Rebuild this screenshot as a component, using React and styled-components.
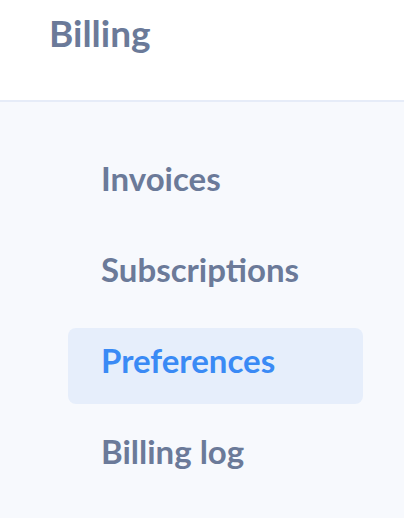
import React from "react";
import styled, { createGlobalStyle } from "styled-components";

const Global = createGlobalStyle`
  html, body { margin: 0; padding: 0; }
  body { background: #f7f9fd; font-family: Lato, "Open Sans", sans-serif; }
`;

const Page = styled.div`
  width: 404px;
  height: 518px;
  background: #f7f9fd;
  overflow: hidden;
`;

const Header = styled.header`
  height: 102px;
  background: #ffffff;
  border-bottom: 2px solid #e6ecf8;
  display: flex;
  align-items: flex-start;
  padding: 9px 0 0 49px;
  box-sizing: border-box;
`;

const Title = styled.h1`
  margin: 0;
  font-size: 37px;
  line-height: 48px;
  font-weight: 700;
  color: #6b7a99;
`;

const Nav = styled.nav`
  display: flex;
  flex-direction: column;
  gap: 15px;
  padding: 44px 41px 0 68px;
`;

const Item = styled.a`
  display: flex;
  align-items: center;
  height: 76px;
  box-sizing: border-box;
  padding: 0 0 13px 33px;
  border-radius: 8px;
  font-size: 33px;
  font-weight: 700;
  text-decoration: none;
  color: ${(p) => (p.$active ? "#3a8af5" : "#6b7a99")};
  background: ${(p) => (p.$active ? "#e6eefb" : "transparent")};
`;

const items = ["Invoices", "Subscriptions", "Preferences", "Billing log"];

export default function App() {
  return (
    <Page>
      <Global />
      <Header>
        <Title>Billing</Title>
      </Header>
      <Nav>
        {items.map((t) => (
          <Item key={t} $active={t === "Preferences"}>
            {t}
          </Item>
        ))}
      </Nav>
    </Page>
  );
}
